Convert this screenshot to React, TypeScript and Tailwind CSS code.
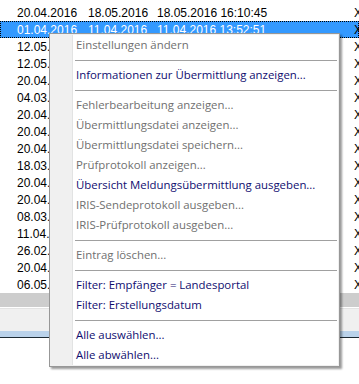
const rows = [
  ["20.04.2016", "18.05.2016", "18.05.2016 16:10:45"],
  ["01.04.2016", "11.04.2016", "11.04.2016 13:52:51"],
  ["12.05.2016", "12.05.2016", "12.05.2016 09:14:22"],
  ["12.05.2016", "12.05.2016", "12.05.2016 09:12:07"],
  ["20.04.2016", "18.05.2016", "18.05.2016 16:08:31"],
  ["04.03.2016", "08.03.2016", "08.03.2016 11:20:16"],
  ["20.04.2016", "18.05.2016", "18.05.2016 16:05:40"],
  ["20.04.2016", "18.05.2016", "18.05.2016 16:03:12"],
  ["20.04.2016", "18.05.2016", "18.05.2016 16:01:55"],
  ["18.03.2016", "21.03.2016", "21.03.2016 10:44:09"],
  ["20.04.2016", "18.05.2016", "18.05.2016 15:58:26"],
  ["20.04.2016", "18.05.2016", "18.05.2016 15:56:03"],
  ["08.03.2016", "10.03.2016", "10.03.2016 08:37:48"],
  ["11.04.2016", "13.04.2016", "13.04.2016 14:02:19"],
  ["26.02.2016", "01.03.2016", "01.03.2016 12:15:33"],
  ["20.04.2016", "18.05.2016", "18.05.2016 15:51:47"],
  ["06.05.2016", "09.05.2016", "09.05.2016 07:59:10"],
];

type Item = { label: string; enabled?: boolean } | "sep";

const menu: Item[] = [
  { label: "Einstellungen ändern" },
  "sep",
  { label: "Informationen zur Übermittlung anzeigen...", enabled: true },
  "sep",
  { label: "Fehlerbearbeitung anzeigen..." },
  { label: "Übermittlungsdatei anzeigen..." },
  { label: "Übermittlungsdatei speichern..." },
  { label: "Prüfprotokoll anzeigen..." },
  { label: "Übersicht Meldungsübermittlung ausgeben...", enabled: true },
  { label: "IRIS-Sendeprotokoll ausgeben..." },
  { label: "IRIS-Prüfprotokoll ausgeben..." },
  "sep",
  { label: "Eintrag löschen..." },
  "sep",
  { label: "Filter: Empfänger = Landesportal", enabled: true },
  { label: "Filter: Erstellungsdatum", enabled: true },
  "sep",
  { label: "Alle auswählen...", enabled: true },
  { label: "Alle abwählen...", enabled: true },
];

function Row({ cells, selected }: { cells: string[]; selected?: boolean }) {
  return (
    <div
      className={`flex h-[17px] items-center whitespace-nowrap ${
        selected ? "bg-[#3399ff] text-white outline outline-1 outline-dotted outline-offset-[-1px] outline-black" : "text-black"
      }`}
    >
      <span className="w-[88px] shrink-0 pl-[17px]">{cells[0]}</span>
      <span className="w-[69px] shrink-0">{cells[1]}</span>
      <span className="w-[197px] shrink-0">{cells[2]}</span>
      <span className="text-black">X</span>
    </div>
  );
}

function ContextMenu() {
  return (
    <div className="absolute left-[49px] top-[33px] w-[291px] border border-[#979797] bg-[#f0f0f0] p-px shadow-[2px_2px_2px_rgba(0,0,0,0.4)] font-['Segoe_UI','Open_Sans',sans-serif] text-[11.4px]">
      <div className="flex">
        <div className="w-[22px] shrink-0 border-r border-[#e2e3e3] bg-[#f0f0f0]" />
        <div className="flex-1 bg-white pl-[3px] pr-px">
          {menu.map((m, i) =>
            m === "sep" ? (
              <div key={i} className="h-[10px] pt-[5px]">
                <div className="-ml-px h-px bg-[#a0a0a0]" />
              </div>
            ) : (
              <div
                key={i}
                className={`flex h-[20px] items-center whitespace-nowrap ${
                  m.enabled ? "text-[#100e70]" : "text-[#707070]"
                }`}
              >
                {m.label}
              </div>
            )
          )}
        </div>
      </div>
    </div>
  );
}

export default function App() {
  return (
    <div className="relative h-[384px] w-[359px] overflow-hidden bg-white font-['Liberation_Sans',Arial,sans-serif] text-[12px]">
      <div className="pt-[4px]">
        {rows.map((r, i) => (
          <Row key={i} cells={r} selected={i === 1} />
        ))}
      </div>
      <div className="h-[14px] bg-[#cdcdcd]" />
      <div className="h-px bg-white" />
      <div className="h-px bg-[#e3e3e3]" />
      <div className="h-[22px] bg-[#f0f0f0]" />
      <div className="h-[6px] bg-[#bad2ea]" />
      <div className="h-px bg-[#1d2a33]" />
      <ContextMenu />
    </div>
  );
}
